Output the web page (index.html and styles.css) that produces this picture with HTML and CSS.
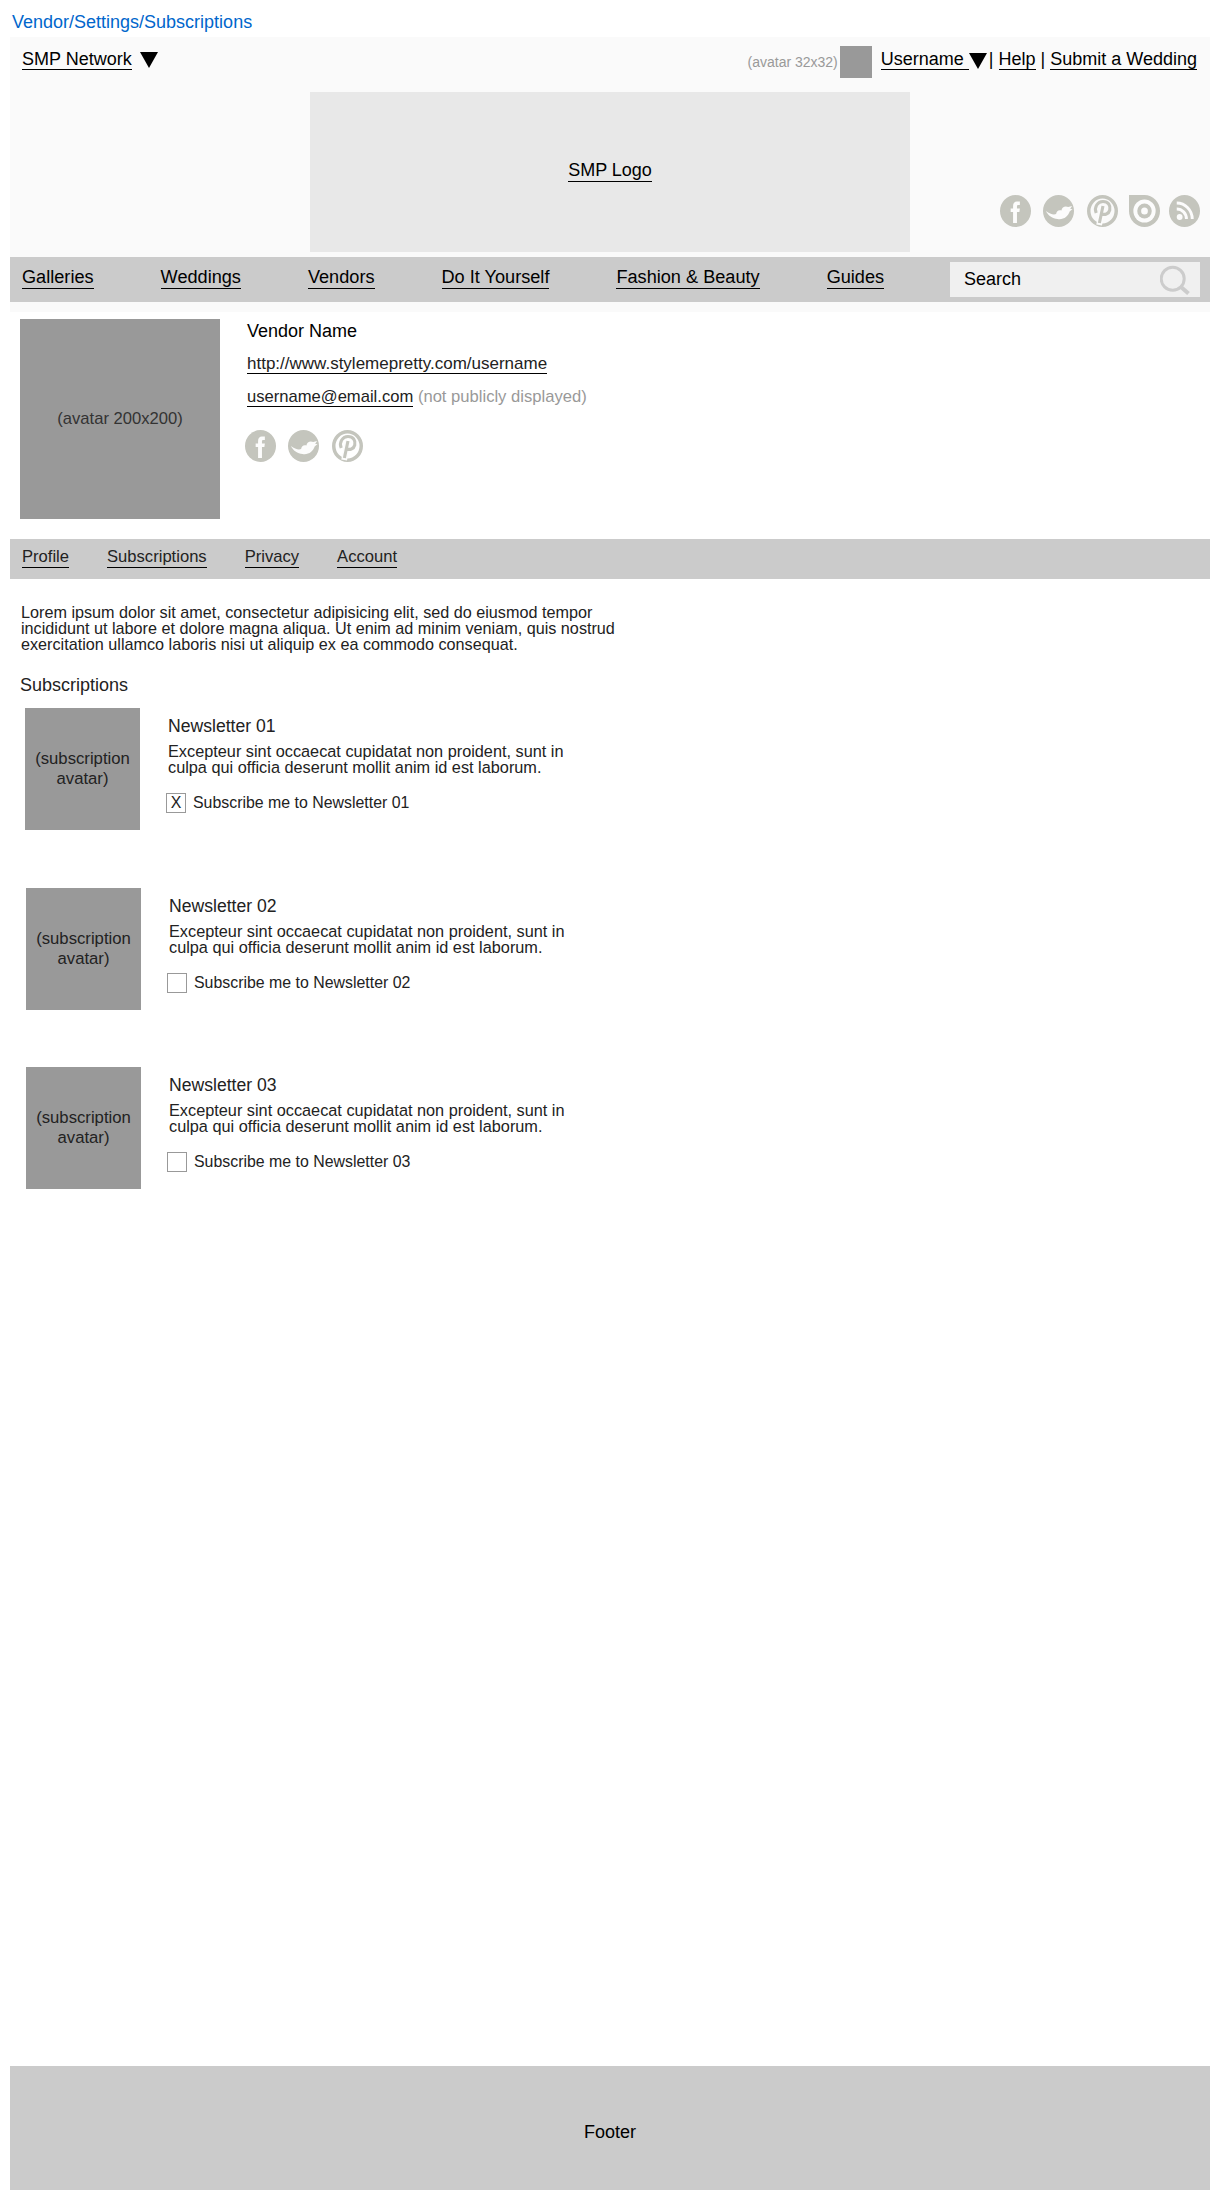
FILE: index.html
```html
<!DOCTYPE html>
<html lang="en">
<head>
<meta charset="UTF-8">
<meta name="viewport" content="width=device-width, initial-scale=1.0">
<title>Vendor Settings - Subscriptions</title>
<link rel="stylesheet" href="styles.css">
</head>
<body>
    <svg class="icon-defs" width="0" height="0">
        <symbol id="i-fb" viewBox="0 0 32 32" preserveAspectRatio="none">
            <circle cx="16" cy="16" r="16" fill="#c4c5bd"/>
            <path d="M13.5 28V17H11v-3.500h2.500V11c0-3 1.500-4.500 4-4.500h3v3.500H19c-1.200 0-1.500.5-1.500 1.500v2h3l-.5 3.500h-2.500V28z" fill="#fcfcfc"/>
        </symbol>
        <symbol id="i-tw" viewBox="0 0 32 32" preserveAspectRatio="none">
            <circle cx="16" cy="16" r="16" fill="#c4c5bd"/>
            <path d="M3 16C7 19 11 20 13.500 19C14 16.500 16 14.500 19 15.500C19.500 12 23 10.500 26 12L30 11L28 14L30.500 14L27.500 16.500C26 21.500 21 25 15 24C10 23.500 5 20.500 3 16z" fill="#fcfcfc"/>
        </symbol>
        <symbol id="i-pin" viewBox="0 0 32 32" preserveAspectRatio="none">
            <circle cx="16" cy="16" r="14.200" fill="none" stroke="#c4c5bd" stroke-width="3.600"/>
            <path d="M16.500 11L12.500 30" fill="none" stroke="#fcfcfc" stroke-width="6"/>
            <path d="M9.500 18C7 12 11 6.500 16.500 6.500C22 6.500 24.500 10.500 23.500 15C22.500 19 18 20.500 15 18.500M16.500 11L12.800 28" fill="none" stroke="#c4c5bd" stroke-width="3.200"/>
        </symbol>
        <symbol id="i-ring" viewBox="0 0 32 32" preserveAspectRatio="none">
            <path d="M0 0h16a16 16 0 1 1-16 16z" fill="#c4c5bd"/>
            <circle cx="16" cy="16" r="11.500" fill="#fcfcfc"/>
            <circle cx="16" cy="16" r="7.500" fill="#c4c5bd"/>
            <circle cx="16" cy="16" r="3.500" fill="#fcfcfc"/>
        </symbol>
        <symbol id="i-rss" viewBox="0 0 32 32" preserveAspectRatio="none">
            <circle cx="16" cy="16" r="16" fill="#c4c5bd"/>
            <circle cx="11" cy="22" r="3" fill="#fcfcfc"/>
            <path d="M8 14a10 10 0 0 1 10 10M8 8a16 16 0 0 1 16 16" fill="none" stroke="#fcfcfc" stroke-width="3"/>
        </symbol>
    </svg>

    <div class="breadcrumb">Vendor/Settings/Subscriptions</div>

    <div class="masthead">
        <div class="top-row">
            <div class="network">
                <a href="#">SMP Network</a>
                <span class="arrow"></span>
            </div>
            <div class="user-links">
                <span class="avatar-note">(avatar 32x32)</span>
                <span class="avatar-small"></span>
                <a class="username" href="#">Username </a><span class="arrow arrow-tight"></span>
                <span class="sep sep-first">|</span>
                <a href="#">Help</a>
                <span class="sep">|</span>
                <a href="#">Submit a Wedding</a>
            </div>
        </div>
        <div class="logo-row">
            <div class="logo"><a href="#">SMP Logo</a></div>
            <div class="social social-top">
                <svg class="icon"><use href="#i-fb"/></svg>
                <svg class="icon"><use href="#i-tw"/></svg>
                <svg class="icon icon-pin"><use href="#i-pin"/></svg>
                <svg class="icon icon-ring"><use href="#i-ring"/></svg>
                <svg class="icon icon-rss"><use href="#i-rss"/></svg>
            </div>
        </div>
    </div>

    <nav class="main-nav">
        <div class="nav-links">
            <a href="#">Galleries</a>
            <a href="#">Weddings</a>
            <a href="#">Vendors</a>
            <a href="#">Do It Yourself</a>
            <a href="#">Fashion &amp; Beauty</a>
            <a href="#">Guides</a>
        </div>
        <div class="search">
            <span>Search</span>
            <svg class="search-icon" viewBox="0 0 30 30">
                <circle cx="12.700" cy="13.700" r="11.500" fill="none" stroke="#ccc" stroke-width="3"/>
                <path d="M21 22l7.500 6.500" stroke="#ccc" stroke-width="4"/>
            </svg>
        </div>
    </nav>
    <div class="nav-strip"></div>

    <section class="vendor">
        <div class="avatar-large">(avatar 200x200)</div>
        <div class="vendor-info">
            <div class="vendor-name">Vendor Name</div>
            <div class="vendor-line vendor-url"><a href="#">http://www.stylemepretty.com/username</a></div>
            <div class="vendor-line"><a href="#">username@email.com</a> <span class="muted">(not publicly displayed)</span></div>
            <div class="social">
                <svg class="icon"><use href="#i-fb"/></svg>
                <svg class="icon"><use href="#i-tw"/></svg>
                <svg class="icon icon-pin"><use href="#i-pin"/></svg>
            </div>
        </div>
    </section>

    <nav class="sub-nav">
        <a href="#">Profile</a>
        <a href="#">Subscriptions</a>
        <a href="#">Privacy</a>
        <a href="#">Account</a>
    </nav>

    <main class="content">
        <p class="intro">Lorem ipsum dolor sit amet, consectetur adipisicing elit, sed do eiusmod tempor incididunt ut labore et dolore magna aliqua. Ut enim ad minim veniam, quis nostrud exercitation ullamco laboris nisi ut aliquip ex ea commodo consequat.</p>
        <h2>Subscriptions</h2>

        <div class="sub-item first">
            <div class="sub-avatar">(subscription avatar)</div>
            <div class="sub-body">
                <h3>Newsletter 01</h3>
                <p>Excepteur sint occaecat cupidatat non proident, sunt in culpa qui officia deserunt mollit anim id est laborum.</p>
                <div class="check-row"><span class="checkbox">X</span>Subscribe me to Newsletter 01</div>
            </div>
        </div>

        <div class="sub-item">
            <div class="sub-avatar">(subscription avatar)</div>
            <div class="sub-body">
                <h3>Newsletter 02</h3>
                <p>Excepteur sint occaecat cupidatat non proident, sunt in culpa qui officia deserunt mollit anim id est laborum.</p>
                <div class="check-row"><span class="checkbox"></span>Subscribe me to Newsletter 02</div>
            </div>
        </div>

        <div class="sub-item">
            <div class="sub-avatar">(subscription avatar)</div>
            <div class="sub-body">
                <h3>Newsletter 03</h3>
                <p>Excepteur sint occaecat cupidatat non proident, sunt in culpa qui officia deserunt mollit anim id est laborum.</p>
                <div class="check-row"><span class="checkbox"></span>Subscribe me to Newsletter 03</div>
            </div>
        </div>
    </main>

    <footer class="footer">Footer</footer>
</body>
</html>
```

FILE: styles.css
```css
body {
    margin: 0;
    padding: 0 10px;
    height: 2200px;
    box-sizing: border-box;
    font-family: "Liberation Sans", Arial, sans-serif;
    background-color: #fff;
    color: #000;
    display: flex;
    flex-direction: column;
}

a {
    color: inherit;
    text-decoration: none;
    border-bottom: 1px solid #000;
}

.icon-defs {
    position: absolute;
}

.breadcrumb {
    height: 37px;
    box-sizing: border-box;
    padding: 11px 0 0 2px;
    font-size: 18px;
    line-height: 22px;
    color: #0066cc;
}

.masthead {
    height: 220px;
    background-color: #fafafa;
    padding-top: 9px;
    box-sizing: border-box;
}

.top-row {
    display: flex;
    justify-content: space-between;
    height: 32px;
    padding: 0 13px 0 12px;
    font-size: 18px;
}

.network,
.user-links {
    display: flex;
    align-items: flex-start;
    line-height: 20px;
}

.network a,
.user-links a {
    margin-top: 3px;
    white-space: pre;
}

.arrow {
    width: 0;
    height: 0;
    margin: 6px 0 0 8px;
    border-left: 9.5px solid transparent;
    border-right: 9.5px solid transparent;
    border-top: 16px solid #000;
}

.arrow-tight {
    margin: 7px 0 0;
}

.sep {
    margin: 3px 5px 0;
}

.sep-first {
    margin-left: 2px;
}

.avatar-note {
    margin: 8px 2px 0 0;
    font-size: 14px;
    line-height: 16px;
    color: #999;
}

.avatar-small {
    width: 32px;
    height: 32px;
    margin-right: 9px;
    background-color: #999;
}

.logo-row {
    position: relative;
    display: flex;
    justify-content: center;
    margin-top: 14px;
}

.logo {
    width: 600px;
    height: 160px;
    background-color: #e8e8e8;
    display: flex;
    align-items: center;
    justify-content: center;
    font-size: 18px;
}

.logo a {
    margin-bottom: 2px;
}

.social {
    display: flex;
    gap: 12px;
}

.social-top {
    position: absolute;
    right: 10px;
    top: 103px;
}

.icon {
    width: 31px;
    height: 32px;
    display: block;
}

.icon-pin {
    margin-left: 1px;
}

.icon-ring {
    margin-left: -1px;
}

.icon-rss {
    margin-left: -3px;
}

.main-nav {
    height: 45px;
    background-color: #cbcbcb;
    display: flex;
    align-items: center;
    justify-content: space-between;
    padding: 0 10px 0 12px;
    box-sizing: border-box;
}

.nav-links {
    display: flex;
    gap: 67px;
    font-size: 18.150px;
    white-space: nowrap;
}

.nav-links a {
    margin-bottom: 4px;
}

.search {
    width: 250px;
    height: 35px;
    flex-shrink: 0;
    background-color: #f0f0f0;
    display: flex;
    align-items: center;
    justify-content: space-between;
    padding: 0 10px 0 14px;
    box-sizing: border-box;
    font-size: 18px;
}

.search-icon {
    width: 30px;
    height: 30px;
}

.nav-strip {
    height: 10px;
    background-color: #fafafa;
}

.vendor {
    display: flex;
    height: 227px;
    padding: 7px 0 0 10px;
    box-sizing: border-box;
}

.avatar-large {
    width: 200px;
    height: 200px;
    background-color: #999;
    color: #333;
    font-size: 16.600px;
    display: flex;
    align-items: center;
    justify-content: center;
}

.vendor-info {
    margin-left: 27px;
    padding-top: 1px;
    font-size: 16.600px;
}

.vendor-name {
    font-size: 18px;
    line-height: 22px;
    margin-bottom: 11px;
}

.vendor-line {
    line-height: 22px;
    margin-bottom: 11px;
    color: #222;
}

.vendor-url {
    font-size: 17px;
}

.muted {
    color: #999;
}

.vendor-info .social {
    margin: 22px 0 0 -2px;
}

.sub-nav {
    height: 40px;
    background-color: #cbcbcb;
    display: flex;
    align-items: center;
    gap: 38px;
    padding: 0 12px;
    font-size: 16.600px;
    color: #222;
    flex-shrink: 0;
}

.sub-nav a {
    margin-bottom: 3px;
}

.content {
    flex: 1;
    padding: 25px 0 0 11px;
    color: #222;
}

.intro {
    width: 620px;
    margin: 0;
    font-size: 16.200px;
    line-height: 16px;
}

h2 {
    margin: 22px 0 0 -1px;
    font-size: 18px;
    line-height: 22px;
    font-weight: normal;
}

.sub-item {
    display: flex;
    height: 179px;
    margin-left: 5px;
    padding-top: 12px;
    box-sizing: border-box;
}

.sub-item.first {
    margin-left: 4px;
    height: 180px;
}

.sub-avatar {
    width: 115px;
    height: 122px;
    background-color: #999;
    font-size: 16.700px;
    line-height: 20px;
    display: flex;
    align-items: center;
    justify-content: center;
    text-align: center;
}

.sub-body {
    width: 410px;
    margin-left: 28px;
    font-size: 16.300px;
}

h3 {
    margin: 7px 0 0;
    font-size: 17.600px;
    line-height: 22px;
    font-weight: normal;
}

.sub-body p {
    margin: 6px 0 0;
    line-height: 16px;
}

.check-row {
    display: flex;
    align-items: center;
    margin: 18px 0 0 -2px;
    font-size: 15.900px;
}

.checkbox {
    width: 20px;
    height: 20px;
    box-sizing: border-box;
    border: 1px solid #999;
    margin-right: 7px;
    text-align: center;
    line-height: 18px;
}

.footer {
    height: 124px;
    padding-top: 8px;
    box-sizing: border-box;
    margin-bottom: 10px;
    background-color: #cbcbcb;
    display: flex;
    align-items: center;
    justify-content: center;
    font-size: 18px;
    flex-shrink: 0;
}
```
